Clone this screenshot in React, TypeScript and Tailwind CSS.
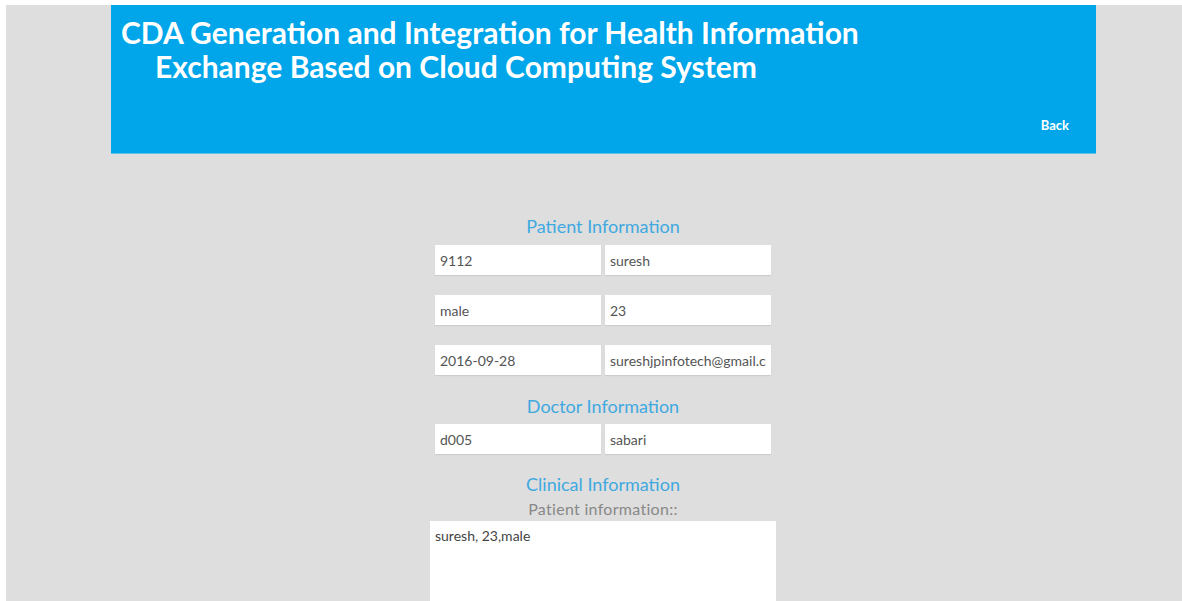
import { useState } from "react";

const font = { fontFamily: "Lato, 'Open Sans', sans-serif" };

function Field({ value }: { value: string }) {
  return (
    <input
      defaultValue={value}
      className="w-[166px] h-[30px] bg-white px-[5px] text-[14px] text-[#555] outline-none shadow-[0_1px_1px_rgba(0,0,0,0.08)]"
      style={font}
    />
  );
}

function SectionTitle({ children }: { children: string }) {
  return (
    <p className="text-[18px] leading-[22px] text-[#3fa9e0] text-center" style={font}>
      {children}
    </p>
  );
}

export default function App() {
  const [notes, setNotes] = useState("suresh, 23,male");

  return (
    <div className="min-h-[601px] bg-white pl-[6px] pt-[5px]" style={font}>
      <div className="min-h-[596px] bg-[#dedede]">
        <header className="ml-[105px] w-[985px] h-[149px] bg-[#00a6e9] border-b border-[#5cc3e6] flex flex-col pl-[10px] pr-[27px]">
          <h1 className="text-white font-bold text-[30px] leading-[34px] pt-[10px]">
            <span className="block">CDA Generation and Integration for Health Information</span>
            <span className="block pl-[34px]">Exchange Based on Cloud Computing System</span>
          </h1>
          <a className="self-end mt-auto mb-[18px] text-white font-bold text-[13px]">Back</a>
        </header>

        <main className="flex flex-col items-center pt-[61px] pl-[18px]">
          <SectionTitle>Patient Information</SectionTitle>
          <div className="flex flex-col gap-[20px] mt-[8px]">
            <div className="flex gap-1">
              <Field value="9112" />
              <Field value="suresh" />
            </div>
            <div className="flex gap-1">
              <Field value="male" />
              <Field value="23" />
            </div>
            <div className="flex gap-1">
              <Field value="2016-09-28" />
              <Field value="sureshjpinfotech@gmail.com" />
            </div>
          </div>

          <div className="mt-[20px]">
            <SectionTitle>Doctor Information</SectionTitle>
          </div>
          <div className="flex gap-1 mt-[7px]">
            <Field value="d005" />
            <Field value="sabari" />
          </div>

          <div className="mt-[19px]">
            <SectionTitle>Clinical Information</SectionTitle>
          </div>
          <p className="text-[16px] leading-[18px] text-[#888] mt-[5px] tracking-[0.3px]">Patient information::</p>
          <textarea
            value={notes}
            onChange={(e) => setNotes(e.target.value)}
            className="mt-[3px] w-[346px] h-[100px] bg-white px-[5px] py-[4px] text-[14px] text-[#444] outline-none resize-none"
            style={font}
          />
        </main>
      </div>
    </div>
  );
}
